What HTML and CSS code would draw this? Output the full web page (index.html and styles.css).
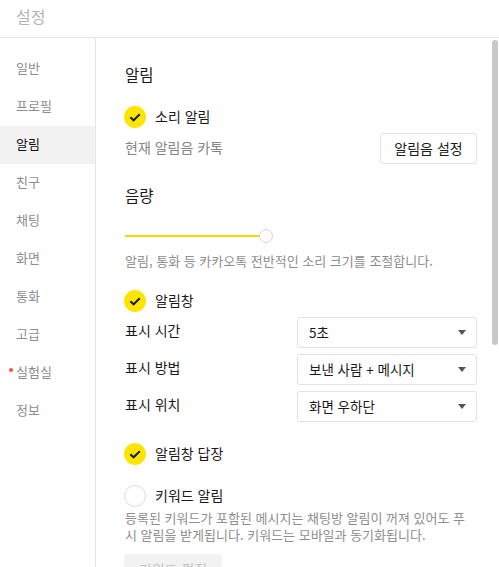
FILE: index.html
```html
<!DOCTYPE html>
<html lang="ko">

<head>
    <meta charset="UTF-8">
    <meta name="viewport" content="width=device-width, initial-scale=1.0">
    <title>설정</title>
    <link rel="stylesheet" href="styles.css">
</head>

<body>
    <header class="top-bar">
        <h1>설정</h1>
    </header>
    <div class="layout">
        <nav class="side-menu">
            <a class="menu-item">일반</a>
            <a class="menu-item">프로필</a>
            <a class="menu-item active">알림</a>
            <a class="menu-item">친구</a>
            <a class="menu-item">채팅</a>
            <a class="menu-item">화면</a>
            <a class="menu-item">통화</a>
            <a class="menu-item">고급</a>
            <a class="menu-item new">실험실</a>
            <a class="menu-item">정보</a>
        </nav>

        <main class="panel">
            <h2 class="section-title">알림</h2>

            <div class="check-row first">
                <span class="check on">
                    <svg viewBox="0 0 22 22" width="22" height="22"><path d="M6.3 11.2 L9.6 14.3 L15.8 8.2" fill="none" stroke="#1e1e1e" stroke-width="2.1"/></svg>
                </span>
                <span class="check-label">소리 알림</span>
            </div>
            <div class="sound-row">
                <span class="muted">현재 알림음 카톡</span>
                <button class="btn">알림음 설정</button>
            </div>

            <h2 class="section-title volume">음량</h2>
            <div class="slider">
                <div class="slider-fill"></div>
                <div class="slider-knob"></div>
            </div>
            <p class="desc slider-desc">알림, 통화 등 카카오톡 전반적인 소리 크기를 조절합니다.</p>

            <div class="check-row">
                <span class="check on">
                    <svg viewBox="0 0 22 22" width="22" height="22"><path d="M6.3 11.2 L9.6 14.3 L15.8 8.2" fill="none" stroke="#1e1e1e" stroke-width="2.1"/></svg>
                </span>
                <span class="check-label">알림창</span>
            </div>
            <div class="option-list">
                <div class="option-row">
                    <span class="option-label">표시 시간</span>
                    <div class="select">5초<i class="caret"></i></div>
                </div>
                <div class="option-row">
                    <span class="option-label">표시 방법</span>
                    <div class="select">보낸 사람 + 메시지<i class="caret"></i></div>
                </div>
                <div class="option-row">
                    <span class="option-label">표시 위치</span>
                    <div class="select">화면 우하단<i class="caret"></i></div>
                </div>
            </div>

            <div class="check-row">
                <span class="check on">
                    <svg viewBox="0 0 22 22" width="22" height="22"><path d="M6.3 11.2 L9.6 14.3 L15.8 8.2" fill="none" stroke="#1e1e1e" stroke-width="2.1"/></svg>
                </span>
                <span class="check-label">알림창 답장</span>
            </div>

            <div class="check-row keyword">
                <span class="check"></span>
                <span class="check-label">키워드 알림</span>
            </div>
            <p class="desc keyword-desc">등록된 키워드가 포함된 메시지는 채팅방 알림이 꺼져 있어도 푸시 알림을 받게됩니다. 키워드는 모바일과 동기화됩니다.</p>
            <button class="btn disabled">키워드 편집</button>
        </main>

        <div class="scroll-thumb"></div>
    </div>
</body>

</html>
```

FILE: styles.css
```css
body {
    margin: 0;
    padding: 0;
    height: 567px;
    overflow: hidden;
    background: #fff;
    color: #1a1a1a;
    font-family: "Noto Sans CJK KR", "Noto Sans", sans-serif;
}

.top-bar {
    height: 37px;
    border-bottom: 1px solid #e6e6e6;
    display: flex;
    align-items: center;
    padding-left: 16px;
}

.top-bar h1 {
    margin: 0;
    font-size: 16px;
    font-weight: normal;
    line-height: 20px;
    color: #b4b4b4;
    margin-top: -6px;
}

.layout {
    position: relative;
    display: flex;
    height: 529px;
}

/* left menu */
.side-menu {
    width: 95px;
    flex-shrink: 0;
    border-right: 1px solid #e6e6e6;
    padding-top: 12px;
    display: flex;
    flex-direction: column;
}

.menu-item {
    position: relative;
    height: 38px;
    box-sizing: border-box;
    padding-bottom: 4px;
    display: flex;
    align-items: center;
    padding-left: 16px;
    font-size: 13px;
    color: #8e8e8e;
}

.menu-item.active {
    background-color: #f2f2f2;
    color: #111;
}

.menu-item.new::before {
    content: "";
    position: absolute;
    left: 9px;
    top: 14px;
    width: 4px;
    height: 4px;
    border-radius: 50%;
    background: #f2553d;
}

/* right panel */
.panel {
    flex: 1;
    overflow: hidden;
    padding: 26px 22px 0 29px;
}

.scroll-thumb {
    position: absolute;
    top: 2px;
    right: 1px;
    width: 6px;
    height: 305px;
    border-radius: 3px;
    background: #c8c8c8;
}

.section-title {
    margin: 0;
    font-size: 15.5px;
    font-weight: normal;
    line-height: 20px;
}

.section-title.volume {
    margin-top: 21px;
}

.check-row {
    display: flex;
    align-items: center;
    height: 22px;
    margin-top: 21px;
    margin-left: -1px;
}

.first {
    margin-top: 22px;
}

.check-row.keyword {
    margin-top: 20px;
}

.check {
    width: 22px;
    height: 22px;
    border-radius: 50%;
    box-sizing: border-box;
    border: 1px solid #dcdcdc;
    background: #fff;
    display: flex;
}

.check.on {
    border: none;
    background: #fee500;
}

.check-label {
    margin-left: 9px;
    font-size: 14px;
    line-height: 18px;
    margin-bottom: 2px;
}

.sound-row {
    margin-top: 5px;
    display: flex;
    justify-content: space-between;
    align-items: center;
}

.muted {
    font-size: 14px;
    color: #858585;
    margin-bottom: 3px;
}

.btn {
    height: 31px;
    width: 97px;
    padding: 0 0 2px;
    font-family: inherit;
    font-size: 14px;
    color: #1a1a1a;
    background: #fff;
    border: 1px solid #e2e2e2;
    border-radius: 3px;
}

.btn.disabled {
    margin-top: 11px;
    margin-left: -1px;
    width: 98px;
    color: #c4c4c4;
    background: #f2f2f2;
    border-color: #f2f2f2;
}

.slider {
    margin-top: 24px;
    display: flex;
    align-items: center;
    height: 14px;
}

.slider-fill {
    width: 134px;
    height: 2px;
    background: #fdd400;
}

.slider-knob {
    width: 14px;
    height: 14px;
    box-sizing: border-box;
    border: 1px solid #d4d4d4;
    border-radius: 50%;
    background: #fff;
}

.desc {
    margin: 0;
    font-size: 13px;
    color: #8e8e8e;
}

.slider-desc {
    margin-top: 10px;
    line-height: 16px;
}

.keyword-desc {
    margin-top: 2px;
    line-height: 17px;
    word-break: break-all;
}

.option-list {
    margin-top: 5px;
    display: flex;
    flex-direction: column;
    gap: 6px;
}

.option-row {
    display: flex;
    justify-content: space-between;
    align-items: center;
}

.option-label {
    font-size: 14px;
    color: #1a1a1a;
    margin-bottom: 6px;
}

.select {
    width: 180px;
    height: 31px;
    box-sizing: border-box;
    border: 1px solid #e2e2e2;
    border-radius: 3px;
    display: flex;
    align-items: center;
    justify-content: space-between;
    padding: 0 10px 2px 11px;
    font-size: 13.5px;
}

.caret {
    width: 0;
    height: 0;
    margin-top: 2px;
    border-left: 4px solid transparent;
    border-right: 4px solid transparent;
    border-top: 5px solid #555;
}
```
